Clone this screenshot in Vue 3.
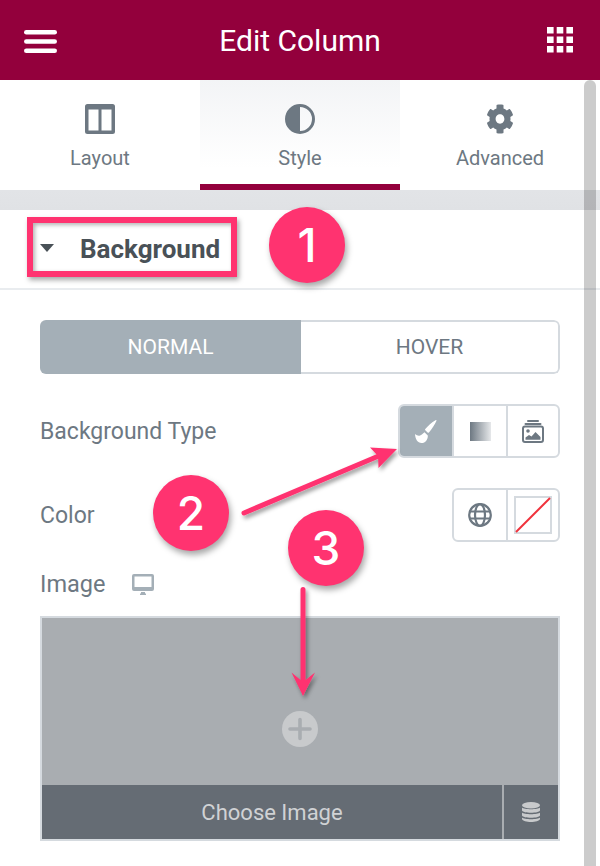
<script setup>
const tabs = [
  { id: 'layout', label: 'Layout' },
  { id: 'style', label: 'Style', active: true },
  { id: 'advanced', label: 'Advanced' },
]
const gridCells = []
for (const y of [0, 9.5, 19]) {
  for (const x of [0, 9.7, 19.4]) gridCells.push({ x, y })
}
</script>

<template>
  <div class="page">
    <header class="top">
      <svg class="burger" viewBox="0 0 33 23" width="33" height="23">
        <rect x="0" y="0" width="33" height="4.6" rx="2.3" />
        <rect x="0" y="9.2" width="33" height="4.6" rx="2.3" />
        <rect x="0" y="18.4" width="33" height="4.6" rx="2.3" />
      </svg>
      <h1>Edit Column</h1>
      <svg class="grid" viewBox="0 0 26 25.500" width="26" height="25.500">
        <rect v-for="(g, i) in gridCells" :key="i" :x="g.x" :y="g.y" width="6.600" height="6.500" />
      </svg>
    </header>

    <div class="body">
      <nav class="tabs">
        <div v-for="t in tabs" :key="t.id" class="tab" :class="{ active: t.active }">
          <svg v-if="t.id === 'layout'" viewBox="0 0 30 30" width="30" height="30">
            <path fill="#6d7882" fill-rule="evenodd" d="M2.500 0h25A2.500 2.500 0 0 1 30 2.500v25a2.500 2.500 0 0 1-2.500 2.500h-25A2.500 2.500 0 0 1 0 27.500v-25A2.500 2.500 0 0 1 2.500 0zM3.500 5.500v21h10v-21zM16.500 5.500v21h10v-21z" />
          </svg>
          <svg v-else-if="t.id === 'style'" viewBox="0 0 30 30" width="30" height="30">
            <circle cx="15" cy="15" r="13.500" fill="none" stroke="#6d7882" stroke-width="3" />
            <path d="M15 1.500A13.500 13.500 0 0 0 15 28.500Z" fill="#6d7882" />
          </svg>
          <svg v-else viewBox="0 0 512 512" width="28" height="30" preserveAspectRatio="none">
            <path fill="#6d7882" d="M487.4 315.700l-42.600-24.600c4.300-23.200 4.300-47 0-70.200l42.600-24.600c4.900-2.800 7.100-8.600 5.500-14-11.100-35.600-30-67.800-54.700-94.600-3.800-4.100-10-5.100-14.800-2.300L380.800 110c-17.900-15.400-38.500-27.300-60.800-35.100V25.800c0-5.600-3.900-10.500-9.400-11.700-36.700-8.200-74.300-7.800-109.200 0-5.500 1.200-9.400 6.100-9.400 11.700V75c-22.200 7.900-42.800 19.800-60.800 35.100L88.700 85.500c-4.900-2.800-11-1.900-14.800 2.300-24.700 26.700-43.600 58.900-54.700 94.600-1.700 5.400.6 11.200 5.500 14L67.300 221c-4.300 23.200-4.300 47 0 70.200l-42.600 24.600c-4.900 2.800-7.100 8.600-5.500 14 11.100 35.600 30 67.800 54.700 94.600 3.800 4.100 10 5.100 14.800 2.300l42.600-24.600c17.900 15.400 38.500 27.300 60.800 35.100v49.200c0 5.600 3.900 10.500 9.400 11.700 36.700 8.200 74.300 7.800 109.200 0 5.500-1.200 9.400-6.100 9.400-11.700v-49.200c22.200-7.900 42.800-19.800 60.800-35.100l42.600 24.600c4.900 2.800 11 1.900 14.800-2.300 24.700-26.700 43.600-58.900 54.700-94.600 1.500-5.500-.7-11.300-5.600-14.100zM256 336c-44.100 0-80-35.900-80-80s35.900-80 80-80 80 35.900 80 80-35.900 80-80 80z" />
          </svg>
          <span>{{ t.label }}</span>
        </div>
      </nav>
      <div class="band"></div>

      <section class="section-head">
        <div class="hl">
          <i class="caret"></i>
          <b>Background</b>
        </div>
      </section>

      <section class="controls">
        <div class="switch">
          <div class="on">NORMAL</div>
          <div class="off">HOVER</div>
        </div>

        <div class="row bgtype">
          <label>Background Type</label>
          <div class="group">
            <div class="cell sel">
              <svg viewBox="0 0 22 23" width="22" height="23">
                <path fill="#fff" d="M20.500 0.200c.8-.4 1.300.1.900.8-1.600 3.500-4.500 8.300-7.500 11.400-.5.500-.9.400-1.300 0l-2.300-2.200c-.4-.4-.4-.8 0-1.200 2.500-3 6.500-6.900 10.200-8.800z" />
                <path fill="#fff" d="M0 14c1.800 1.500 3.500 2 5 1.500 1.500-.6 2.800-2 4.500-3.300l3.300 3.200c.3 3.700-2.300 7.600-6.300 7.600-3.800 0-6.300-4-6.500-9z" />
              </svg>
            </div>
            <div class="cell mid"><span class="grad"></span></div>
            <div class="cell">
              <svg viewBox="0 0 22 23" width="22" height="23">
                <rect x="5" y="0" width="12" height="2" rx="1" fill="#6d7882" />
                <rect x="2.500" y="3" width="17" height="2" rx="1" fill="#6d7882" />
                <rect x="1" y="6.500" width="20" height="15.500" rx="2" fill="none" stroke="#6d7882" stroke-width="2" />
                <circle cx="6" cy="11" r="1.800" fill="#6d7882" />
                <path fill="#6d7882" d="M3.500 19.700v-2.200l3.500-2.500 2.500 1.500 4-4.500 5 5v2.700z" />
              </svg>
            </div>
          </div>
        </div>

        <div class="row color">
          <label>Color</label>
          <div class="group">
            <div class="cell">
              <svg viewBox="0 0 24 24" width="24" height="24" fill="none" stroke="#6d7882" stroke-width="2.200">
                <circle cx="12" cy="12" r="10.800" />
                <ellipse cx="12" cy="12" rx="5" ry="10.800" />
                <path d="M1.500 8.500h21M1.500 15.500h21" />
              </svg>
            </div>
            <div class="cell">
              <svg viewBox="0 0 38 38" width="38" height="38">
                <rect x="1" y="1" width="36" height="36" fill="#fff" stroke="#d5dadf" stroke-width="2" />
                <path d="M2 36L36 2" stroke="#f0323c" stroke-width="2" />
              </svg>
            </div>
          </div>
        </div>

        <div class="imglabel">
          <label>Image</label>
          <svg viewBox="0 0 22 21" width="22" height="21">
            <path fill-rule="evenodd" fill="#a4afb7" d="M2 0h18a2 2 0 0 1 2 2v13a2 2 0 0 1-2 2H2a2 2 0 0 1-2-2V2a2 2 0 0 1 2-2zM2.500 2.500v10.500h17V2.500zM9 18h4v1.500h1V21H8v-1.500h1z" />
          </svg>
        </div>

        <div class="media">
          <div class="preview">
            <div class="plus">
              <svg viewBox="0 0 36 36" width="36" height="36">
                <circle cx="18" cy="18" r="18" fill="#c8cacc" />
                <path d="M18 8.500v19M8 18h20" stroke="#a9adb1" stroke-width="3.600" stroke-linecap="round" />
              </svg>
            </div>
          </div>
          <div class="bar">
            <div class="choose">Choose Image</div>
            <div class="db">
              <svg viewBox="0 0 18 20" width="18" height="20" fill="#c8cacc">
                <ellipse cx="9" cy="3.200" rx="9" ry="3.200" />
                <path d="M0 5.500c2 2.300 16 2.300 18 0v3c-1 3-17 3-18 0zM0 10.500c2 2.300 16 2.300 18 0v3c-1 3-17 3-18 0zM0 15.500c2 2.300 16 2.300 18 0v1.500c-1 4-17 4-18 0z" />
              </svg>
            </div>
          </div>
        </div>
      </section>

      <div class="scrollbar"></div>

      <div class="badge b1">1</div>
      <div class="badge b2">2</div>
      <div class="badge b3">3</div>

      <svg class="arrows" viewBox="0 0 600 786" width="600" height="786">
        <defs>
          <filter id="ds" x="-30%" y="-30%" width="160%" height="160%">
            <feDropShadow dx="2" dy="3" stdDeviation="2" flood-color="#000" flood-opacity="0.4" />
          </filter>
        </defs>
        <g filter="url(#ds)">
          <path d="M244 433L381 375" stroke="#ff3370" stroke-width="5" stroke-linecap="round" fill="none" />
          <path d="M397 369L370 367.500L378 376L378.500 388Z" fill="#ff3370" />
          <path d="M303 509.500V604" stroke="#ff3370" stroke-width="5" stroke-linecap="round" fill="none" />
          <path d="M303 616L291.500 592.500L303 602L315 592.500Z" fill="#ff3370" />
        </g>
      </svg>
    </div>
  </div>
</template>

<style>
html, body { margin: 0; padding: 0; background: #fff; }
</style>

<style scoped>
.page {
  width: 600px;
  height: 866px;
  overflow: hidden;
  font-family: Roboto, "Liberation Sans", sans-serif;
  background: #fff;
  color: #6d7882;
}
.top {
  height: 80px;
  background: #93003c;
  display: flex;
  align-items: center;
  padding: 0 27px 0 24px;
  box-sizing: border-box;
}
.top h1 {
  flex: 1;
  margin: 0;
  padding-right: 4px;
  text-align: center;
  font-size: 30px;
  font-weight: 400;
  color: #fff;
}
.burger { fill: #fff; margin-top: 2px; }
.grid { fill: #fff; }
.body { position: relative; height: 786px; }
.tabs { display: flex; height: 110px; }
.tab {
  width: 200px;
  height: 110px;
  box-sizing: border-box;
  display: flex;
  flex-direction: column;
  align-items: center;
  padding-top: 24px;
  font-size: 20px;
}
.tab.active {
  background: linear-gradient(#f3f4f6, #fff 85%);
  border-bottom: 6px solid #93003c;
}
.tab span { line-height: 24px; margin-top: 12px; }
.band { height: 20px; background: linear-gradient(#e2e4e7, #e0e2e5); }
.section-head {
  height: 80px;
  border-bottom: 2px solid #e9ecef;
  box-sizing: border-box;
  padding: 7px 0 0 27px;
}
.hl {
  width: 210px;
  height: 60px;
  box-sizing: border-box;
  border: 6px solid #ff3370;
  box-shadow: 2px 3px 5px rgba(0, 0, 0, 0.35), inset 2px 2px 4px rgba(0, 0, 0, 0.3);
  display: flex;
  align-items: center;
  padding-left: 7px;
}
.caret {
  width: 0;
  height: 0;
  border-left: 7.500px solid transparent;
  border-right: 7.500px solid transparent;
  border-top: 8px solid #495157;
  margin-right: 26px;
  margin-top: 2px;
}
.hl b {
  font-size: 26px;
  font-weight: 700;
  color: #495157;
  margin-top: 4px;
}
.controls { padding: 30px 40px 0; width: 520px; }
.switch {
  display: flex;
  height: 54px;
  border-radius: 6px;
  overflow: hidden;
  font-size: 21px;
}
.switch > div { display: flex; align-items: center; justify-content: center; box-sizing: border-box; }
.on { width: 261px; background: #a4afb7; color: #fff; }
.off {
  flex: 1;
  border: 2px solid #d5dadf;
  border-left: 0;
  border-radius: 0 6px 6px 0;
}
.row {
  display: flex;
  justify-content: space-between;
  align-items: center;
}
.row label, .imglabel label { font-size: 23px; color: #6d7882; }
.bgtype, .color { margin-top: 30px; }
.group {
  display: flex;
  height: 54px;
  box-sizing: border-box;
  border: 2px solid #d5dadf;
  border-radius: 6px;
  overflow: hidden;
}
.cell {
  width: 52px;
  display: flex;
  align-items: center;
  justify-content: center;
  box-sizing: border-box;
}
.cell + .cell { border-left: 2px solid #d5dadf; }
.cell.mid { width: 54px; }
.cell.sel { background: #a4afb7; margin: -2px 0 -2px -2px; width: 54px; padding-left: 2px; }
.grad {
  width: 21px;
  height: 19px;
  background: linear-gradient(90deg, #6d7882, #e6e8ea);
}
.imglabel {
  display: flex;
  align-items: center;
  gap: 27px;
  margin-top: 26px;
  height: 32px;
}
.imglabel label { font-size: 23.500px; }
.media {
  margin-top: 16px;
  width: 520px;
  height: 225px;
  box-sizing: border-box;
  border: 2px solid #d5dadf;
  display: flex;
  flex-direction: column;
}
.preview {
  height: 167px;
  background: #a9adb1;
  display: flex;
  align-items: center;
  justify-content: center;
}
.plus { display: flex; margin-top: 55px; }
.bar { flex: 1; display: flex; background: #656c74; color: #d0d2d4; }
.choose {
  flex: 1;
  display: flex;
  align-items: center;
  justify-content: center;
  font-size: 22px;
  border-right: 2px solid #a9adb1;
}
.db { width: 54px; display: flex; align-items: center; justify-content: center; }
.scrollbar {
  position: absolute;
  top: 0;
  right: 4px;
  width: 12px;
  height: 786px;
  background: rgba(0, 0, 0, 0.2);
  border-radius: 6px 6px 0 0;
}
.badge {
  position: absolute;
  width: 76px;
  height: 76px;
  border-radius: 50%;
  background: #ff3370;
  color: #fff;
  display: flex;
  align-items: center;
  justify-content: center;
  font-size: 46px;
  font-weight: 500;
  font-family: Inter, Roboto, sans-serif;
  box-shadow: 2px 4px 6px rgba(0, 0, 0, 0.35);
}
.b1 { left: 269px; top: 127px; }
.b2 { left: 153px; top: 395px; }
.b3 { left: 288px; top: 430px; }
.arrows { position: absolute; left: 0; top: 0; pointer-events: none; }
</style>
